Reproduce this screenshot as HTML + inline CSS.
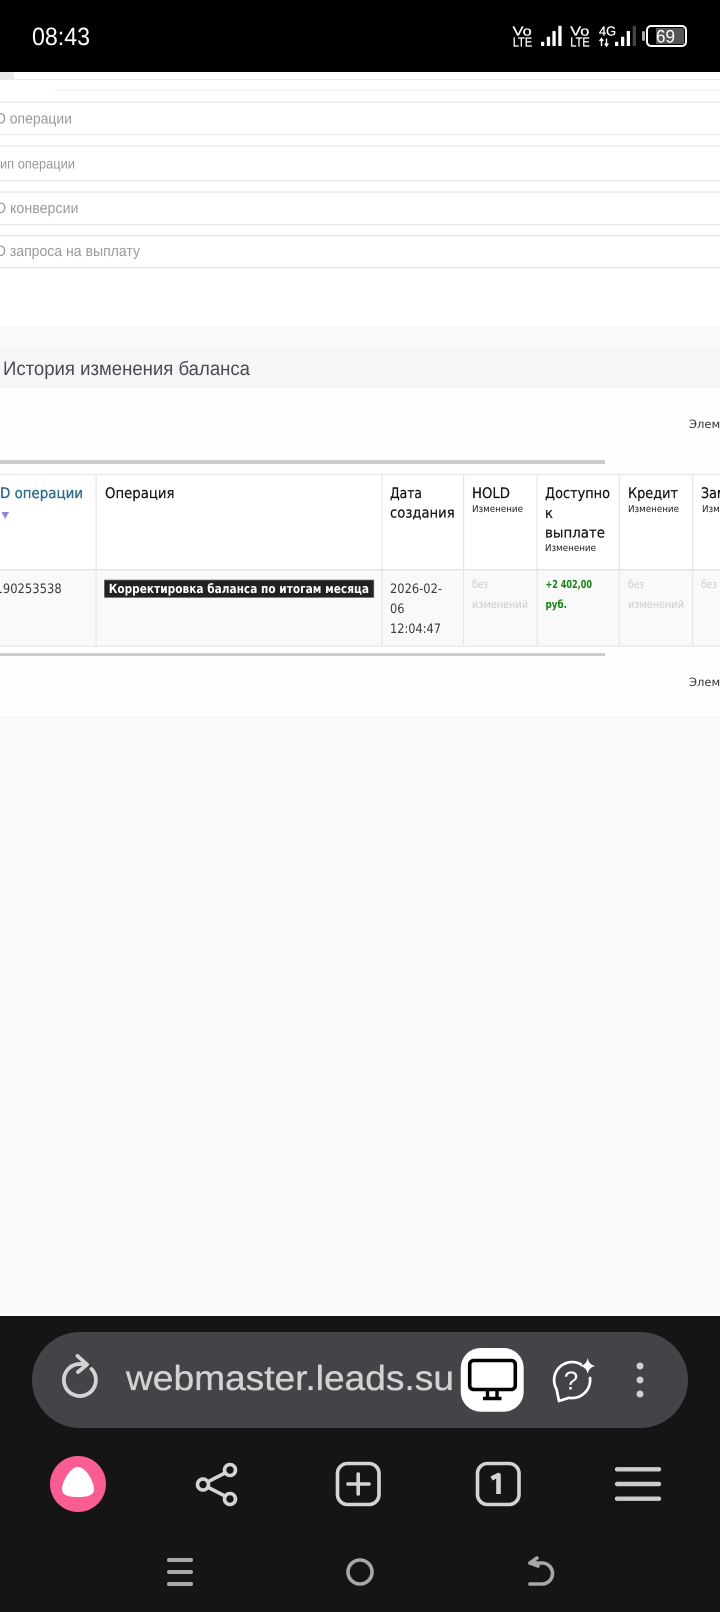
<!DOCTYPE html>
<html lang="ru">
<head>
<meta charset="utf-8">
<title>webmaster.leads.su</title>
<style>
html,body{margin:0;padding:0;width:720px;height:1612px;overflow:hidden;background:#f9f9f9}
svg{display:block;position:absolute;left:0;top:0}
text{white-space:pre;text-rendering:geometricPrecision}
.l{font-family:"Liberation Sans",sans-serif}
.d{font-family:"DejaVu Sans",sans-serif}
</style>
</head>
<body>
<svg width="720" height="1612" viewBox="0 0 720 1612" xmlns="http://www.w3.org/2000/svg">
<!-- page backgrounds -->
<rect x="0" y="72" width="720" height="254" fill="#ffffff"/>
<rect x="0" y="326" width="720" height="24" fill="#f9f9f9"/>
<rect x="0" y="350" width="720" height="38" fill="#f6f6f6"/>
<rect x="0" y="349.5" width="720" height="1" fill="#efefef"/>
<rect x="0" y="388" width="720" height="329" fill="#fefefe"/>
<rect x="0" y="717" width="720" height="599" fill="#fafafa"/>
<rect x="0" y="716.5" width="720" height="1" fill="#f3f3f3"/>

<!-- filter form -->
<rect x="0" y="72" width="14" height="7" fill="#e8e8e8"/>
<rect x="0" y="79" width="720" height="1" fill="#e8e8e8"/>
<rect x="55" y="89.5" width="665" height="1" fill="#ededed"/>
<g fill="#e6e6e6">
<rect x="0" y="101.5" width="720" height="1.2"/><rect x="0" y="134" width="720" height="1.2"/>
<rect x="0" y="145.5" width="720" height="1.2"/><rect x="0" y="180" width="720" height="1.2"/>
<rect x="0" y="191.5" width="720" height="1.2"/><rect x="0" y="224" width="720" height="1.2"/>
<rect x="0" y="235" width="720" height="1.2"/><rect x="0" y="267" width="720" height="1.2"/>
</g>
<g class="l" fill="#999999">
<text x="-5" y="123.5" font-size="15" textLength="77" lengthAdjust="spacingAndGlyphs">О операции</text>
<text x="0" y="168.5" font-size="14" textLength="75" lengthAdjust="spacingAndGlyphs">ип операции</text>
<text x="-5" y="213" font-size="15" textLength="83.5" lengthAdjust="spacingAndGlyphs">О конверсии</text>
<text x="-5" y="256" font-size="15" textLength="145" lengthAdjust="spacingAndGlyphs">О запроса на выплату</text>
</g>
<text class="l" x="3" y="375" font-size="19.5" fill="#4a4a55" textLength="247" lengthAdjust="spacingAndGlyphs">История изменения баланса</text>

<!-- grid -->
<text class="d" x="689" y="428" font-size="11.5" fill="#333333">Элементы</text>
<text class="d" x="689" y="686" font-size="11.5" fill="#333333">Элементы</text>
<rect x="0" y="460" width="605" height="4" fill="#cccccc"/>
<rect x="0" y="653" width="605" height="3" fill="#cccccc"/>

<rect x="0" y="474" width="720" height="95" fill="#ffffff"/>
<rect x="0" y="569" width="720" height="77" fill="#f9f9f9"/>
<g fill="#e6e6e6">
<rect x="0" y="474" width="720" height="1.2"/>
<rect x="0" y="569" width="720" height="1.5"/>
<rect x="0" y="645.5" width="720" height="1.2"/>
<rect x="95.5" y="474" width="1.2" height="172"/>
<rect x="381.5" y="474" width="1.2" height="172"/>
<rect x="463" y="474" width="1.2" height="172"/>
<rect x="536.5" y="474" width="1.2" height="172"/>
<rect x="618.7" y="474" width="1.2" height="172"/>
<rect x="692" y="474" width="1.2" height="172"/>
</g>

<g class="d" font-size="14.5">
<text x="0" y="498" fill="#2b6c8c" stroke="#2b6c8c" stroke-width=".3" textLength="83" lengthAdjust="spacingAndGlyphs">D операции</text>
<path d="M1.5 512H9L5.2 519Z" fill="#8888dd"/>
<g fill="#111111" stroke="#111111" stroke-width=".2">
<text x="105" y="498" textLength="69.5" lengthAdjust="spacingAndGlyphs">Операция</text>
<text x="390" y="498" textLength="32" lengthAdjust="spacingAndGlyphs">Дата</text>
<text x="390" y="517.5" textLength="64.7" lengthAdjust="spacingAndGlyphs">создания</text>
<text x="472" y="498" textLength="38" lengthAdjust="spacingAndGlyphs">HOLD</text>
<text x="545" y="498" textLength="65" lengthAdjust="spacingAndGlyphs">Доступно</text>
<text x="545" y="518" textLength="8" lengthAdjust="spacingAndGlyphs">к</text>
<text x="545" y="537.5" textLength="60" lengthAdjust="spacingAndGlyphs">выплате</text>
<text x="628" y="498" textLength="50" lengthAdjust="spacingAndGlyphs">Кредит</text>
<text x="701" y="498" textLength="84" lengthAdjust="spacingAndGlyphs">Заморожено</text>
</g>
<g fill="#222222" font-size="9.5">
<text x="472" y="512" textLength="51" lengthAdjust="spacingAndGlyphs">Изменение</text>
<text x="545" y="551" textLength="51" lengthAdjust="spacingAndGlyphs">Изменение</text>
<text x="628" y="512" textLength="51" lengthAdjust="spacingAndGlyphs">Изменение</text>
<text x="702" y="512" textLength="51" lengthAdjust="spacingAndGlyphs">Изменение</text>
</g>
<g fill="#3a3a3a" font-size="13">
<text x="-4.5" y="593" textLength="66.2" lengthAdjust="spacingAndGlyphs">190253538</text>
<text x="390" y="593" textLength="52" lengthAdjust="spacingAndGlyphs">2026-02-</text>
<text x="390" y="613" textLength="14.5" lengthAdjust="spacingAndGlyphs">06</text>
<text x="390" y="633" textLength="51" lengthAdjust="spacingAndGlyphs">12:04:47</text>
</g>
<rect x="104.4" y="580" width="269.4" height="17.5" fill="#222222" stroke="#777777" stroke-width=".7"/>
<text x="108.7" y="592.8" font-size="12.5" font-weight="700" fill="#ffffff" textLength="260.3" lengthAdjust="spacingAndGlyphs">Корректировка баланса по итогам месяца</text>
<g fill="#cccccc" font-size="11">
<text x="472" y="588" textLength="16" lengthAdjust="spacingAndGlyphs">без</text>
<text x="472" y="608" textLength="56" lengthAdjust="spacingAndGlyphs">изменений</text>
<text x="628" y="588" textLength="16" lengthAdjust="spacingAndGlyphs">без</text>
<text x="628" y="608" textLength="56" lengthAdjust="spacingAndGlyphs">изменений</text>
<text x="701" y="588" textLength="16" lengthAdjust="spacingAndGlyphs">без</text>
</g>
<g fill="#158015" font-size="11" font-weight="700">
<text x="545.5" y="588" textLength="46.5" lengthAdjust="spacingAndGlyphs">+2 402,00</text>
<text x="545.5" y="608" textLength="21.5" lengthAdjust="spacingAndGlyphs">руб.</text>
</g>
</g>

<!-- status bar -->
<rect x="0" y="0" width="720" height="72" fill="#000000"/>
<text class="l" x="32" y="45" font-size="25" fill="#ffffff" textLength="58" lengthAdjust="spacingAndGlyphs">08:43</text>
<g class="l" fill="#ffffff" stroke="#ffffff" stroke-width=".25">
<text x="512.7" y="35.3" font-size="13" textLength="19" lengthAdjust="spacingAndGlyphs">Vo</text>
<text x="512.7" y="46.5" font-size="13" textLength="19.5" lengthAdjust="spacingAndGlyphs">LTE</text>
<text x="570.3" y="35.3" font-size="13" textLength="19" lengthAdjust="spacingAndGlyphs">Vo</text>
<text x="570.3" y="46.5" font-size="13" textLength="19.5" lengthAdjust="spacingAndGlyphs">LTE</text>
<text x="599" y="35.3" font-size="13" textLength="17" lengthAdjust="spacingAndGlyphs">4G</text>
</g>
<g fill="#ffffff">
<rect x="541" y="41.7" width="3.3" height="4.3" rx=".5"/>
<rect x="546.8" y="36.7" width="3.3" height="9.3" rx=".5"/>
<rect x="552.4" y="31" width="3.3" height="15" rx=".5"/>
<rect x="558.3" y="25.7" width="3.3" height="20.3" rx=".5"/>
<rect x="615" y="41.7" width="3.3" height="4.3" rx=".5"/>
<rect x="621" y="36.7" width="3.3" height="9.3" rx=".5"/>
<rect x="626.7" y="31" width="3.3" height="15" rx=".5"/>
<rect x="632.7" y="25.7" width="3.3" height="20.3" rx=".5" fill="#444444"/>
<path d="M601.5 46V39M599.5 41L601.5 38.5L603.2 41M606.5 38.5V45.5M604.8 43.5L606.5 46L608.3 43.5" stroke="#ffffff" stroke-width="1.4" fill="none"/>
</g>
<rect x="642" y="31" width="3" height="10" rx="1.5" fill="#aaaaaa"/>
<rect x="656" y="28" width="28" height="16" fill="#555555"/>
<rect x="647" y="26" width="39" height="20" rx="4" fill="none" stroke="#ffffff" stroke-width="2"/>
<text class="l" x="656" y="42.5" font-size="18" fill="#ffffff" textLength="19" lengthAdjust="spacingAndGlyphs">69</text>

<!-- browser chrome -->
<rect x="0" y="1316" width="720" height="296" fill="#151516"/>
<rect x="32" y="1332" width="656" height="96" rx="48" fill="#434348"/>
<g fill="none" stroke="#d4d4d4" stroke-width="3.8" stroke-linecap="round" stroke-linejoin="round">
<path d="M91.5 1369A16 16 0 1 1 80 1364L86 1364"/>
<path d="M77.5 1356L87 1364.5L78 1372"/>
</g>
<text class="l" x="126" y="1390" font-size="35" fill="#d2d2d2" stroke="#d2d2d2" stroke-width=".35" textLength="328" lengthAdjust="spacingAndGlyphs">webmaster.leads.su</text>

<rect x="460.7" y="1348" width="63" height="63.7" rx="20" fill="#ffffff"/>
<rect x="469.7" y="1360.5" width="45.6" height="29" rx="4" fill="none" stroke="#000000" stroke-width="3.6"/>
<path d="M487.5 1391V1398M497 1391V1398M483 1398.5H501.5" fill="none" stroke="#000000" stroke-width="3.4"/>

<path d="M581 1364.4A18 18 0 0 0 556.5 1389L559 1401L569 1397.8A18 18 0 0 0 590 1378" fill="none" stroke="#ffffff" stroke-width="2.7" stroke-linejoin="round" stroke-linecap="round"/>
<path d="M587.7 1358Q589 1365 595.5 1366Q589 1367 587.7 1374Q586.4 1367 580 1366Q586.4 1365 587.7 1358Z" fill="#ffffff"/>
<text class="l" x="571" y="1389.5" font-size="26" fill="#ffffff" text-anchor="middle">?</text>
<g fill="#d0d0d0">
<circle cx="640" cy="1366" r="3.5"/><circle cx="640" cy="1380" r="3.5"/><circle cx="640" cy="1394" r="3.5"/>
</g>

<circle cx="78" cy="1484" r="28" fill="#f95d93"/>
<path d="M78 1467C86 1467 94 1482 94 1489C94 1496 86 1497 78 1497C70 1497 62 1496 62 1489C62 1482 70 1467 78 1467Z" fill="#ffffff"/>

<g fill="none" stroke="#d4d4d4" stroke-width="3.6" stroke-linecap="round" stroke-linejoin="round">
<circle cx="230" cy="1470" r="5.5"/><circle cx="203" cy="1484.5" r="5.5"/><circle cx="230" cy="1499" r="5.5"/>
<path d="M208 1481.7L225 1473M208 1487.3L225 1496"/>
<rect x="337.5" y="1463.5" width="41.5" height="41" rx="10"/>
<path d="M348 1484H369M358.2 1474V1494"/>
<rect x="477.5" y="1463.5" width="41.5" height="41" rx="10"/>
</g>
<path d="M491.5 1478.5L498.5 1475V1494" fill="none" stroke="#d4d4d4" stroke-width="4.6" stroke-linejoin="round"/>
<g fill="none" stroke="#cccccc" stroke-width="4.4" stroke-linecap="round">
<path d="M617 1469.3H659M617 1484H659M617 1498.7H659"/>
</g>

<g fill="none" stroke="#a8a8a8" stroke-width="4" stroke-linecap="round">
<path d="M169 1560H191M169 1572H191M169 1584H191"/>
</g>
<circle cx="360" cy="1572" r="12" fill="none" stroke="#a8a8a8" stroke-width="3.6"/>
<g fill="none" stroke="#a8a8a8" stroke-width="3.6" stroke-linecap="round" stroke-linejoin="round">
<path d="M537 1558L530 1563L538 1566"/>
<path d="M530 1563H542A10.5 10.5 0 0 1 542 1584H530"/>
</g>
</svg>
</body>
</html>
